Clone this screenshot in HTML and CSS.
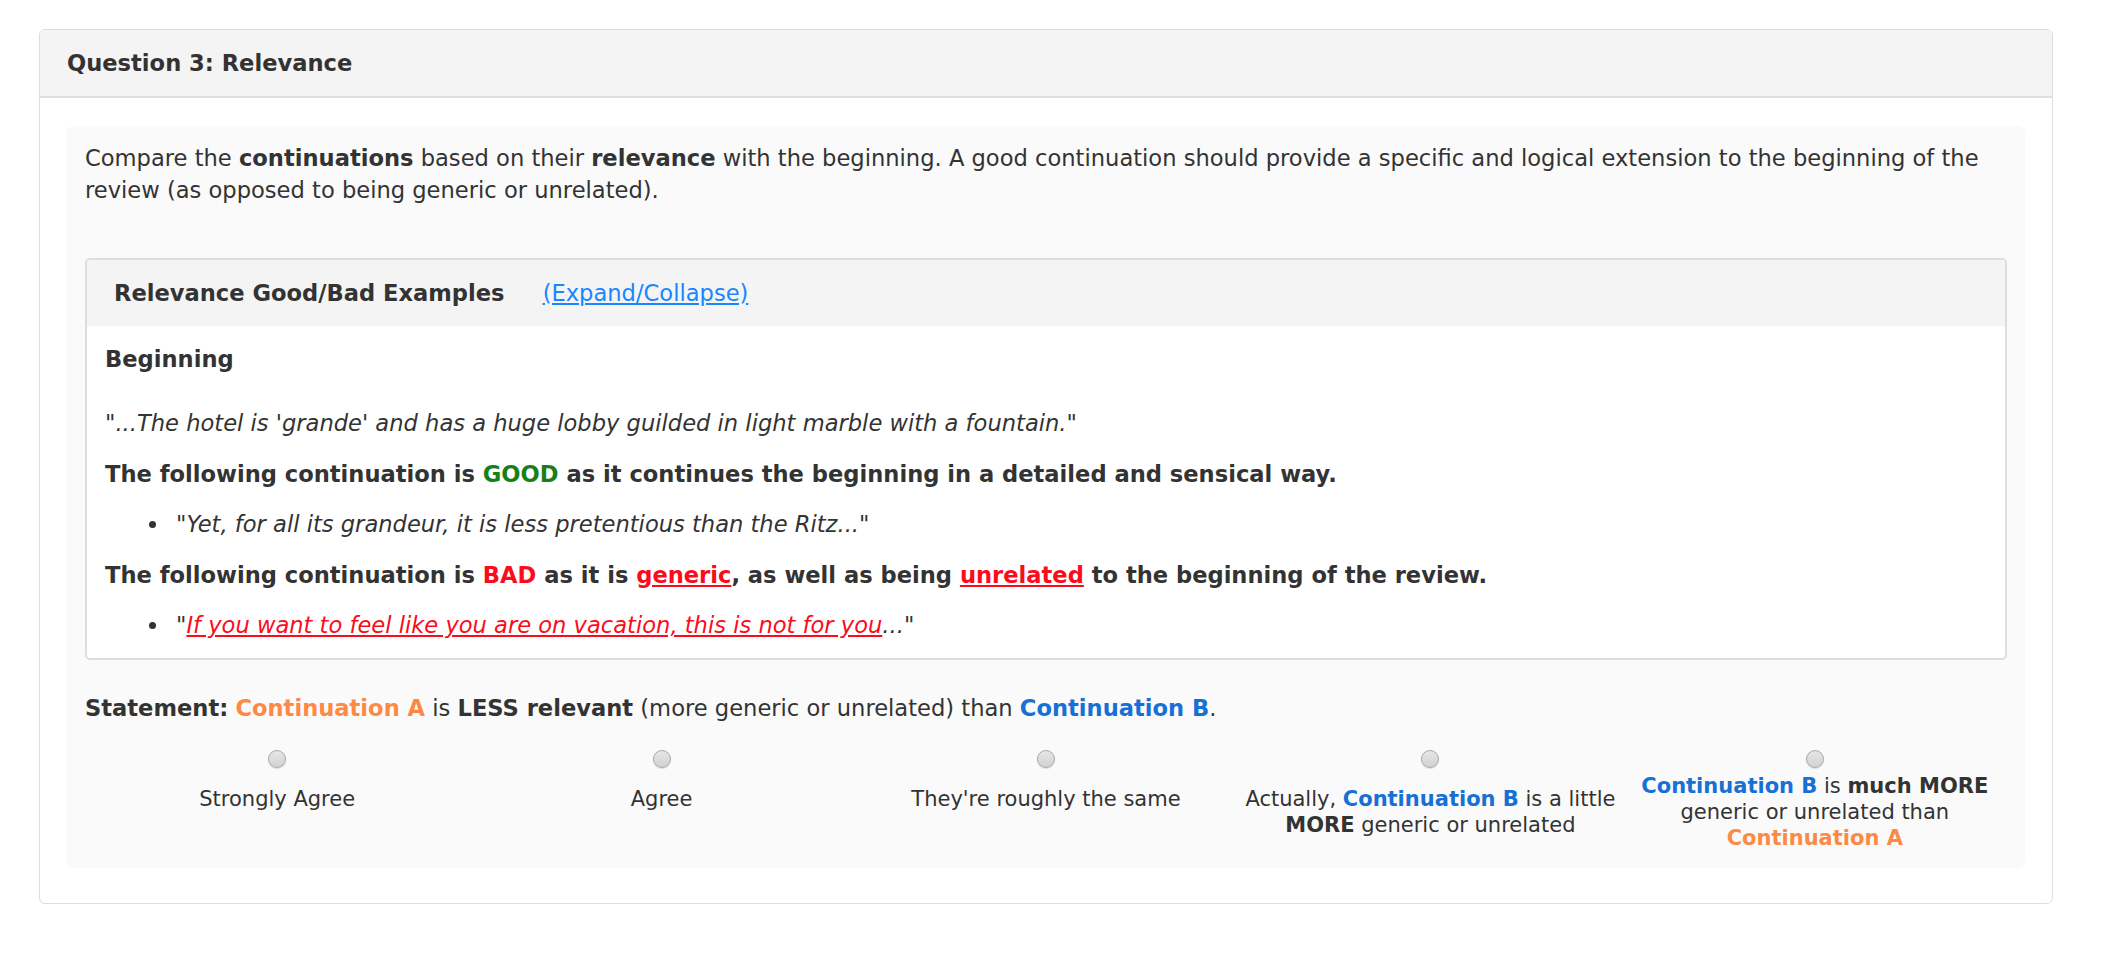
FILE: index.html
```html
<!DOCTYPE html>
<html lang="en">

<head>
    <meta charset="UTF-8">
    <meta name="viewport" content="width=device-width, initial-scale=1.0">
    <title>Question 3: Relevance</title>
    <link rel="stylesheet" href="styles.css">
</head>

<body>
    <div class="page">
        <div class="card">
            <div class="card-header">Question 3: Relevance</div>
            <div class="card-body">
                <div class="question">
                    <p class="intro">
                        Compare the <b>continuations</b> based on their <b>relevance</b> with the beginning. A good continuation should provide a specific and logical extension to the beginning of the review (as opposed to being generic or unrelated).
                    </p>

                    <!-- examples panel -->
                    <div class="examples">
                        <div class="examples-header">
                            <b>Relevance Good/Bad Examples</b>
                            <a href="#" class="toggle">(Expand/Collapse)</a>
                        </div>
                        <div class="examples-body">
                            <p class="beginning"><b>Beginning</b></p>
                            <p><i>"...The hotel is 'grande' and has a huge lobby guilded in light marble with a fountain."</i></p>
                            <p><b>The following continuation is <span class="good">GOOD</span> as it continues the beginning in a detailed and sensical way.</b></p>
                            <ul>
                                <li><i>"Yet, for all its grandeur, it is less pretentious than the Ritz..."</i></li>
                            </ul>
                            <p><b>The following continuation is <span class="bad">BAD</span> as it is <span class="bad-u">generic</span>, as well as being <span class="bad-u">unrelated</span> to the beginning of the review.</b></p>
                            <ul class="last">
                                <li><i>"<span class="bad-u">If you want to feel like you are on vacation, this is not for you</span>..."</i></li>
                            </ul>
                        </div>
                    </div>

                    <p class="statement">
                        <b>Statement:</b> <b class="cont-a">Continuation A</b> is <b>LESS relevant</b> (more generic or unrelated) than <b class="cont-b">Continuation B</b>.
                    </p>

                    <div class="scale">
                        <label class="option">
                            <input type="radio" name="q3">
                            <span class="opt-label">Strongly Agree</span>
                        </label>
                        <label class="option">
                            <input type="radio" name="q3">
                            <span class="opt-label">Agree</span>
                        </label>
                        <label class="option">
                            <input type="radio" name="q3">
                            <span class="opt-label">They're roughly the same</span>
                        </label>
                        <label class="option">
                            <input type="radio" name="q3">
                            <span class="opt-label">Actually, <b class="cont-b">Continuation B</b> is a little <b>MORE</b> generic or unrelated</span>
                        </label>
                        <label class="option">
                            <input type="radio" name="q3">
                            <span class="opt-label tall"><b class="cont-b">Continuation B</b> is <b>much MORE</b> generic or unrelated than <b class="cont-a">Continuation A</b></span>
                        </label>
                    </div>
                </div>
            </div>
        </div>
    </div>
</body>

</html>
```

FILE: styles.css
```css
* {
    margin: 0;
    padding: 0;
    box-sizing: border-box;
}

body {
    background-color: #fff;
    color: #333;
    font-family: "DejaVu Sans", Verdana, sans-serif;
    font-size: 22.6px;
    line-height: 32px;
}

.page {
    padding: 29px 59px 0 39px;
}

.card {
    border: 1px solid #ddd;
    border-radius: 6px;
    overflow: hidden;
}

.card-header {
    height: 68px;
    padding: 0 27px;
    line-height: 66px;
    font-weight: bold;
    background-color: #f4f4f4;
    border-bottom: 2px solid #e0e0e0;
}

.card-body {
    padding: 28px 27px 35px 26px;
}

.question {
    padding: 16px 18px 17px 19px;
    border-radius: 8px;
    background-color: #fafafa;
}

.intro {
    margin-bottom: 52px;
}

/* good / bad examples */
.examples {
    border: 2px solid #ddd;
    border-radius: 5px;
    background-color: #fff;
    overflow: hidden;
}

.examples-header {
    height: 66px;
    padding: 0 27px;
    line-height: 66px;
    background-color: #f4f4f4;
}

.toggle {
    margin-left: 31px;
    color: #1a86ff;
}

.examples-body {
    padding: 17px 18px 0 18px;
}

.examples-body p {
    margin-bottom: 18.5px;
}

.examples-body p.beginning {
    margin-bottom: 32px;
}

.examples-body ul {
    padding-left: 65px;
    margin-bottom: 18.5px;
    list-style: disc;
}

.examples-body li {
    padding-left: 6px;
}

.examples-body ul.last {
    margin-bottom: 17px;
}

.good {
    color: #178017;
}

.bad {
    color: #fd0a1b;
}

.bad-u {
    color: #fd0a1b;
    text-decoration: underline;
}

.cont-a {
    color: #fd8a44;
}

.cont-b {
    color: #1670d6;
}

.statement {
    margin-top: 32px;
}

/* answer scale */
.scale {
    display: grid;
    grid-template-columns: repeat(5, minmax(0, 1fr));
    margin-top: 26px;
}

.option {
    display: flex;
    flex-direction: column;
    align-items: center;
    text-align: center;
}

.option input {
    -webkit-appearance: none;
    appearance: none;
    width: 18px;
    height: 18px;
    border: 1px solid #a9a9a9;
    border-radius: 50%;
    background: linear-gradient(#e6e6e6, #d2d2d2);
    box-shadow: 0 1px 1px rgba(0, 0, 0, .12);
}

/* labels are a bit wider than their column, as in the original */
.opt-label {
    flex: none;
    width: 400px;
    margin-top: 18px;
    font-size: 21px;
    line-height: 26px;
}

.opt-label.tall {
    margin-top: 5px;
}
```
